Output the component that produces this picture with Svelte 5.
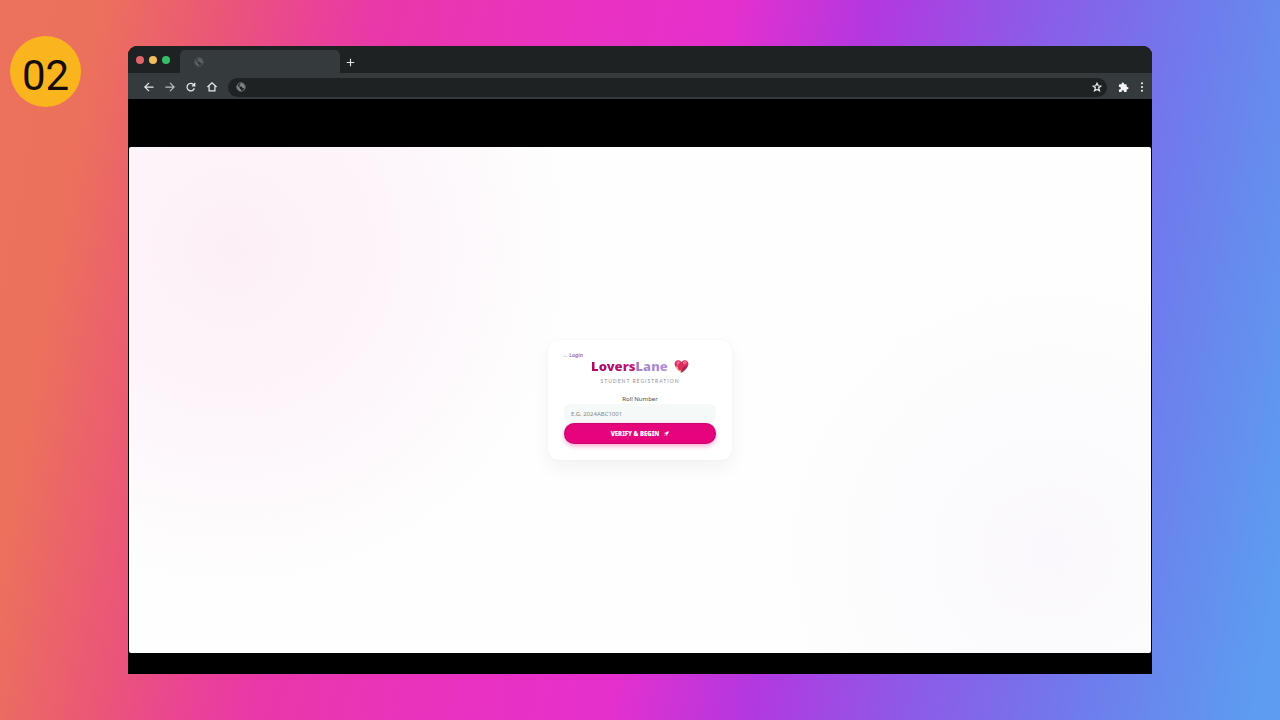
<script lang="ts">
const step = '02'
const lights = ['#e0656b', '#f2bd5c', '#34c066']

let rollNumber = $state('')
let address = $state('')
</script>

{#snippet globe()}
	<svg class="globe" viewBox="0 0 24 24" aria-hidden="true">
		<circle cx="12" cy="12" r="10" />
		<path d="M3 8l6 6v2l3 2v4C5 21 1 15 3 8zM11 2v3L8 8v3h6l2 4h3l1 3c3-5 1-14-9-16z" />
	</svg>
{/snippet}

<main>
	<aside><span class="badge">{step}</span></aside>

	<div class="window">
		<header class="tabs">
			<div class="lights">
				{#each lights as color (color)}
					<span style:background={color}></span>
				{/each}
			</div>
			<div class="tab">{@render globe()}</div>
			<button class="icon add" aria-label="New tab">
				<svg viewBox="0 0 24 24"><path d="M12 2v20M2 12h20" /></svg>
			</button>
		</header>

		<nav class="toolbar">
			<button class="icon" aria-label="Back">
				<svg viewBox="0 0 24 24"><path d="M23 12H3M12 2L2 12l10 10" /></svg>
			</button>
			<button class="icon forward" aria-label="Forward">
				<svg viewBox="0 0 24 24"><path d="M1 12h20M12 2l10 10-10 10" /></svg>
			</button>
			<button class="icon" aria-label="Reload">
				<svg viewBox="0 0 24 24"><path d="M20 15a9 9 0 1 1-2-9l3 3M21 2v7h-7" /></svg>
			</button>
			<button class="icon" aria-label="Home">
				<svg viewBox="0 0 24 24"><path d="M1 12L12 2l11 10M5 10v11h14V10" /></svg>
			</button>
			<div class="address">
				{@render globe()}
				<input type="text" aria-label="Address" bind:value={address} />
				<button class="icon" aria-label="Bookmark">
					<svg viewBox="0 0 24 24"
						><path d="M12 3l3 6 6 1-5 4 2 7-6-3-6 3 2-7-5-4 6-1z" /></svg
					>
				</button>
			</div>
			<button class="icon puzzle" aria-label="Extensions">
				<svg viewBox="0 0 24 24"
					><path
						d="M20.500 11H19V7a2 2 0 0 0-2-2h-4V3.500a2.500 2.500 0 0 0-5 0V5H4a2 2 0 0 0-2 2v3.800h1.500a2.700 2.700 0 0 1 0 5.400H2V20a2 2 0 0 0 2 2h3.800v-1.500a2.700 2.700 0 0 1 5.400 0V22H17a2 2 0 0 0 2-2v-4h1.500a2.500 2.500 0 0 0 0-5z"
					/></svg
				>
			</button>
			<button class="icon dots" aria-label="Menu">
				<svg viewBox="0 0 8 24"
					><circle cx="4" cy="3" r="2.500" /><circle cx="4" cy="12" r="2.500" /><circle
						cx="4"
						cy="21"
						r="2.500"
					/></svg
				>
			</button>
		</nav>

		<div class="screen">
			<div class="page">
				<form class="card" onsubmit={(e) => e.preventDefault()}>
					<a class="back" href="#login">← Login</a>
					<h1>
						<span class="brand">LoversLane</span>
						<svg class="heart" viewBox="0 0 24 24" aria-hidden="true">
							<path
								fill="#dc2d5e"
								d="M12 22C7 18 1 13 1 7.500 1 1 9 0 12 5c3-5 11-4 11 2.500C23 13 17 18 12 22z"
							/>
							<path fill="#f46b91" d="M4 6c1-3 4-3 6-1L5 11zM14 5c2-3 6-2 7 1l-5 3z" />
							<path fill="#a81f52" d="M12 22l3-9 7-3c-1 5-6 9-10 12z" />
							<path fill="#e9b27c" d="M2 11l4 1 1 5 4 1 1 4C8 19 3 15 2 11z" />
						</svg>
					</h1>
					<p>STUDENT REGISTRATION</p>
					<label for="roll">Roll Number</label>
					<input id="roll" type="text" placeholder="E.G. 2024ABC1001" bind:value={rollNumber} />
					<button class="submit" type="submit">
						VERIFY &amp; BEGIN
						<svg viewBox="0 0 24 24" aria-hidden="true">
							<path fill="#fff" d="M23 1c-8 0-12 5-15 10l5 5C18 13 23 9 23 1z" />
							<path fill="#ff8cc8" d="M8 10l-6 1 5-5 5-1zM14 16l-1 6 5-5 1-5zM7 14l3 3-7 4z" />
						</svg>
					</button>
				</form>
			</div>
		</div>
	</div>
</main>

<style>
:global(body) {
	margin: 0;
}

main {
	box-sizing: border-box;
	min-height: 100vh;
	padding-block: 46px;
	display: grid;
	grid-template-columns: 1fr 8fr 1fr;
	background: linear-gradient(
		100deg,
		#ec725b 0%,
		#ec715c 7%,
		#ea5678 16%,
		#ea4494 22%,
		#e938a8 27%,
		#ea33bc 38%,
		#e530cd 52%,
		#b338df 62%,
		#8b5ce8 74%,
		#6f7cec 86%,
		#5d9cf0 98%
	);
	font-family: 'Noto Sans', sans-serif;
}

aside {
	padding-left: 10px;
	margin-top: -10px;
}

.badge {
	box-sizing: border-box;
	width: 71px;
	height: 71px;
	padding-top: 8px;
	display: grid;
	place-items: center;
	border-radius: 50%;
	background: #fab51e;
	color: #160c08;
	font: 42px/1 Roboto, sans-serif;
}

.window {
	display: flex;
	flex-direction: column;
	border-radius: 9px 9px 0 0;
	overflow: hidden;
	background: #000;
}

button {
	padding: 0;
	border: 0;
	background: none;
	font-family: inherit;
}

.icon {
	display: grid;
	flex: none;
	width: 10px;
	height: 10px;
}

.icon svg {
	width: 100%;
	height: 100%;
	fill: none;
	stroke: #e8eaea;
	stroke-width: 3;
}

.globe {
	flex: none;
	width: 10px;
	height: 10px;
	fill: #81878a;
}

.globe circle {
	fill: none;
	stroke: #81878a;
	stroke-width: 2;
}

.tabs {
	height: 27px;
	display: flex;
	align-items: end;
	background: #1f2223;
}

.lights {
	align-self: center;
	display: flex;
	gap: 5px;
	width: 44px;
	padding-left: 8px;
}

.lights span {
	width: 8px;
	height: 8px;
	border-radius: 50%;
}

.tab {
	box-sizing: border-box;
	width: 160px;
	height: 23px;
	padding-left: 14px;
	display: flex;
	align-items: center;
	border-radius: 5px 5px 0 0;
	background: #353a3c;
}

.tab .globe {
	opacity: 0.5;
}

.add {
	width: 9px;
	height: 9px;
	margin: 0 0 6px 6px;
}

.toolbar {
	box-sizing: border-box;
	height: 26px;
	padding: 2px 8px 0 16px;
	display: flex;
	align-items: center;
	gap: 11px;
	background: #353a3c;
}

.forward {
	opacity: 0.75;
}

.address {
	flex: 1;
	height: 19px;
	padding-inline: 8px 5px;
	display: flex;
	align-items: center;
	border-radius: 10px;
	background: #1f2223;
}

.address input {
	flex: 1;
	min-width: 0;
	border: 0;
	background: none;
	color: #e8eaea;
	font-size: 10px;
	outline: none;
}

.puzzle svg,
.dots svg {
	fill: #f4f5f5;
	stroke: none;
}

.puzzle {
	width: 11px;
	height: 11px;
}

.dots {
	width: 4px;
}

/* letterbox bars above and below the page */
.screen {
	flex: 1;
	padding: 48px 1px 21px;
	display: flex;
}

.page {
	flex: 1;
	padding: 24px;
	display: grid;
	place-items: center;
	border-radius: 2px;
	background:
		radial-gradient(circle at 10% 20%, #fcf0f6 0%, #fdf5fa 16%, transparent 34%),
		radial-gradient(circle at 90% 80%, #faf8fc 0%, transparent 28%),
		#fefefe;
}

.card {
	position: relative;
	box-sizing: border-box;
	width: 184px;
	padding: 16px;
	display: flex;
	flex-direction: column;
	text-align: center;
	border-radius: 10px;
	background: #fff;
	box-shadow:
		0 0 2px rgb(0 0 0 / 6%),
		0 8px 18px rgb(0 0 0 / 5%);
}

.back {
	position: absolute;
	top: 11px;
	left: 15px;
	color: #8763b9;
	font-size: 5px;
	line-height: 8px;
	font-weight: 600;
	text-decoration: none;
}

h1 {
	margin: 0;
	display: flex;
	justify-content: center;
	align-items: center;
	gap: 6px;
	font-size: 13px;
	line-height: 20px;
	font-weight: 900;
}

.brand {
	background: linear-gradient(90deg, #ad0868 0%, #bd1479 57%, #a287cc 61%, #b88fda 100%);
	background-clip: text;
	color: transparent;
}

.heart {
	width: 15px;
	height: 15px;
}

p {
	margin: 0;
	color: #8c8c94;
	font-family: Lato, sans-serif;
	font-size: 5px;
	line-height: 10px;
	letter-spacing: 1px;
}

label {
	margin-top: 8px;
	color: #4c4c54;
	font-size: 6px;
	line-height: 10px;
}

#roll {
	box-sizing: border-box;
	width: 100%;
	height: 19px;
	padding: 0 7px;
	border: 0;
	border-radius: 6px;
	background: #f5f9f8;
	color: #4c4c54;
	font: 6px 'Noto Sans', sans-serif;
}

#roll::placeholder {
	color: #85898a;
	opacity: 1;
}

.submit {
	height: 21px;
	display: flex;
	justify-content: center;
	align-items: center;
	gap: 4px;
	border-radius: 11px;
	background: #e6047c;
	box-shadow:
		inset 0 0 2px #99055c,
		0 2px 5px rgb(230 4 124 / 35%);
	color: #fff;
	font-size: 6px;
	font-weight: 900;
}

.submit svg {
	width: 6px;
	height: 6px;
}
</style>
